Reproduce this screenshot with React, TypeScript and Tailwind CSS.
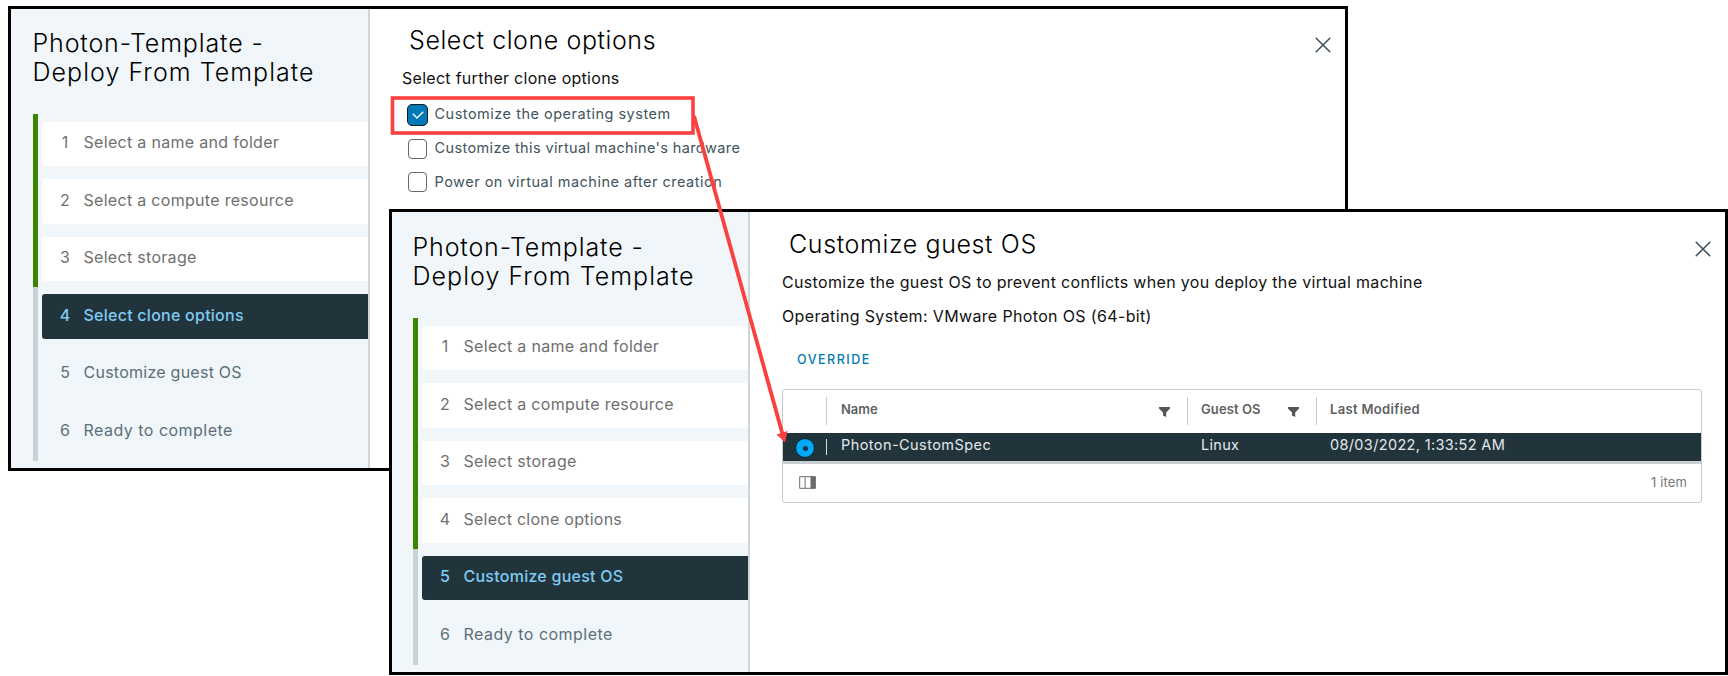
import type { ReactNode } from "react";

type Step = { label: string; tracking: string };

const steps: Step[] = [
  { label: "Select a name and folder", tracking: "tracking-[0.31px]" },
  { label: "Select a compute resource", tracking: "tracking-[0.3px]" },
  { label: "Select storage", tracking: "tracking-[0.3px]" },
  { label: "Select clone options", tracking: "tracking-[0.25px]" },
  { label: "Customize guest OS", tracking: "tracking-[0.25px]" },
  { label: "Ready to complete", tracking: "tracking-[0.48px]" },
];

function StepItem({ index, step, active }: { index: number; step: Step; active: number }) {
  const state =
    index < active
      ? "bg-white text-[#6f6f6f]"
      : index === active
        ? "bg-[#21333b] font-medium text-[#80cbf2]"
        : "text-[#5c6f78]";
  return (
    <li className={`flex h-[44.6px] items-center rounded-l-[3px] pb-[3.5px] pl-[17.5px] text-base leading-5 ${state}`}>
      <span className="w-[11px] text-center">{index + 1}</span>
      <span className={`ml-[13px] whitespace-nowrap ${step.tracking}`}>{step.label}</span>
    </li>
  );
}

function Sidebar({ active, className, green }: { active: number; className: string; green: string }) {
  return (
    <aside className={`shrink-0 border-r-2 border-[#ccd6db] bg-[#f0f6f9] ${className}`}>
      <h1 className="text-[25px] font-light leading-[28.6px] text-black">
        <span className="block whitespace-nowrap tracking-[0.86px]">Photon-Template -</span>
        <span className="block whitespace-nowrap tracking-[1.04px]">Deploy From Template</span>
      </h1>
      <div className="mt-[28px] flex">
        <div className="flex h-[347px] w-[5px] flex-col bg-[#c8d3d7]">
          <div className={`bg-[#3c8500] ${green}`} />
        </div>
        <ol className="ml-[4.5px] flex flex-1 flex-col gap-[12.9px] pt-[7.6px]">
          {steps.map((step, i) => (
            <StepItem key={step.label} index={i} step={step} active={active} />
          ))}
        </ol>
      </div>
    </aside>
  );
}

function CloseIcon() {
  return (
    <svg className="size-4" viewBox="0 0 16 16" fill="none" stroke="#3a4f5a" strokeWidth="1.5" strokeLinecap="round">
      <path d="M1.2 1.2 14.8 14.8M14.8 1.2 1.2 14.8" />
    </svg>
  );
}

function FilterIcon() {
  return (
    <svg className="h-[10px] w-[11px]" viewBox="0 0 11 10" fill="#555">
      <path d="M0 0h11v1.6L7.2 5.4V10L4 8.4v-3L0 1.6z" />
    </svg>
  );
}

function ColumnsIcon() {
  return (
    <svg className="h-[13px] w-[17px]" viewBox="0 0 17 13" fill="none" stroke="#6a6a6a">
      <path d="M.7.7h15.6v11.6H.7z" />
      <path d="M6.2.7v11.6" strokeWidth="1.4" stroke="#999" />
      <path d="M11.5.5h5v12h-5z" fill="#6a6a6a" stroke="none" />
    </svg>
  );
}

function Option({ checked, tracking, children }: { checked?: boolean; tracking: string; children: ReactNode }) {
  return (
    <label className="flex h-[33.7px] items-center">
      {checked ? (
        <span className="flex h-[22px] w-[21px] items-center justify-center rounded-[5px] border-[1.5px] border-[#101c22] bg-[#0079b8]">
          <svg className="h-[8px] w-[12px]" viewBox="0 0 12 8" fill="none" stroke="#fff" strokeWidth="1.4">
            <path d="M.8 2.8 5 7 11.2.8" />
          </svg>
        </span>
      ) : (
        <span className="mx-[1px] h-[20px] w-[19px] rounded-[4px] border-[1.5px] border-[#666] bg-white" />
      )}
      <span className={`ml-[6.5px] -mt-[1px] whitespace-nowrap text-[14.5px] leading-5 text-[#42545d] ${tracking}`}>{children}</span>
    </label>
  );
}

function CloneDialog() {
  return (
    <section className="absolute left-[8px] top-[6px] flex h-[465px] w-[1340px] border-3 border-black bg-white">
      <Sidebar active={3} className="w-[359px] pl-[21.5px] pt-[20px]" green="h-[173px]" />
      <main className="flex-1 pl-[32px]">
        <header className="flex items-start justify-between pl-[7px] pr-[14px] pt-[17px]">
          <h2 className="whitespace-nowrap text-[25px] font-light leading-[29px] tracking-[0.58px] text-black">
            Select clone options
          </h2>
          <span className="mt-[11px]"><CloseIcon /></span>
        </header>
        <p className="mt-[13px] whitespace-nowrap text-base leading-[20px] tracking-[0.28px] text-[#111]">
          Select further clone options
        </p>
        <div className="mt-[10px] pl-[5px]">
          <Option checked tracking="tracking-[0.5px]">Customize the operating system</Option>
          <Option tracking="tracking-[0.38px]">Customize this virtual machine's hardware</Option>
          <Option tracking="tracking-[0.49px]">Power on virtual machine after creation</Option>
        </div>
      </main>
    </section>
  );
}

function SpecTable() {
  return (
    <div className="mt-[19px] flex h-[114px] w-[920px] flex-col overflow-hidden rounded-[3px] border border-[#c3ced4] bg-white">
      <div className="flex h-[43px] pt-[7px] text-[13px] font-semibold leading-[24px] text-[#5f5f5f]">
        <div className="h-[28px] w-[44px] border-r border-[#c3ced4]" />
        <div className="flex h-[28px] w-[361px] justify-between border-r border-[#c3ced4] pl-[14px] pr-[17px]">
          <span>Name</span>
          <span className="pt-[10px]"><FilterIcon /></span>
        </div>
        <div className="flex h-[28px] w-[129px] justify-between border-r border-[#c3ced4] pl-[13px] pr-[17px]">
          <span className="tracking-[0.1px]">Guest OS</span>
          <span className="pt-[10px]"><FilterIcon /></span>
        </div>
        <span className="pl-[13px] tracking-[0.33px]">Last Modified</span>
      </div>
      <div className="flex h-[28px] bg-[#21333b] text-[14.5px] leading-[23px] text-[#e4e9eb]">
        <div className="flex w-[44px] items-center pl-[12px] pt-[2px]">
          <span className="flex size-[20px] items-center justify-center rounded-full border border-[#111d22] bg-[#00a8f5]">
            <span className="size-[5px] rounded-full bg-[#17384a]" />
          </span>
        </div>
        <div className="-ml-px mt-[6px] h-[16px] w-px bg-[#d5dcdf]" />
        <span className="w-[361px] pl-[14px] tracking-[0.43px]">Photon-CustomSpec</span>
        <span className="w-[129px] pl-[13px] tracking-[0.3px]">Linux</span>
        <span className="pl-[13px] tracking-[0.34px]">08/03/2022, 1:33:52 AM</span>
      </div>
      <div className="h-[3px] bg-[#cbcfd1]" />
      <div className="flex flex-1 items-center justify-between pb-[1px] pl-[16px] pr-[14px] text-[13px] text-[#777]">
        <ColumnsIcon />
        <span className="tracking-[0.12px]">1 item</span>
      </div>
    </div>
  );
}

function GuestDialog() {
  return (
    <section className="absolute left-[389px] top-[209px] flex h-[466px] w-[1339px] border-3 border-black bg-white">
      <Sidebar active={4} className="w-[358px] pl-[20.5px] pt-[21px]" green="h-[231px]" />
      <main className="flex-1 pl-[32px]">
        <header className="flex items-start justify-between pl-[7px] pr-[14px] pt-[18px]">
          <h2 className="whitespace-nowrap text-[25px] font-light leading-[29px] tracking-[0.62px] text-black">
            Customize guest OS
          </h2>
          <span className="mt-[11px]"><CloseIcon /></span>
        </header>
        <p className="mt-[13px] whitespace-nowrap text-base leading-[20px] tracking-[0.33px] text-[#111]">
          Customize the guest OS to prevent conflicts when you deploy the virtual machine
        </p>
        <p className="mt-[14px] whitespace-nowrap text-base leading-[20px] tracking-[0.35px] text-[#111]">
          Operating System: VMware Photon OS (64-bit)
        </p>
        <button className="ml-[15px] mt-[24px] block text-[12.5px] font-medium leading-[20px] tracking-[1.5px] text-[#0079ad]">
          OVERRIDE
        </button>
        <SpecTable />
      </main>
    </section>
  );
}

function Callout() {
  return (
    <svg className="pointer-events-none absolute left-0 top-0 h-[676px] w-[1728px]" viewBox="0 0 1728 676" fill="none">
      <rect x="392.5" y="98" width="300.5" height="35" stroke="#fb4040" strokeWidth="3.6" />
      <path d="M694 116 782.5 434" stroke="#fb4040" strokeWidth="3.8" />
      <path d="M776.5 434.5 787.5 431 785 442.5z" fill="#fb4040" />
    </svg>
  );
}

export default function App() {
  return (
    <div className="relative h-[676px] w-[1728px] overflow-hidden bg-white font-['Inter',sans-serif]">
      <CloneDialog />
      <GuestDialog />
      <Callout />
    </div>
  );
}
